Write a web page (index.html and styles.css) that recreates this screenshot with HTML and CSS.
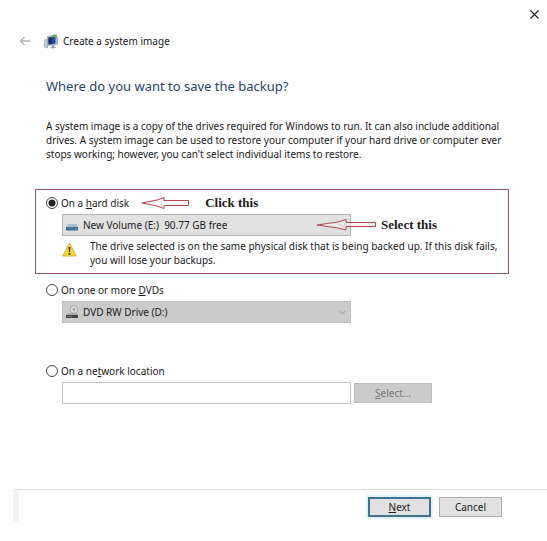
FILE: index.html
```html
<!DOCTYPE html>
<html lang="en">
  <head>
    <meta charset="UTF-8" />
    <meta name="viewport" content="width=device-width, initial-scale=1.0" />
    <title>Create a system image</title>
    <link rel="stylesheet" href="styles.css">
  </head>

  <body>
    <form class="wizard">
      <div class="titlebar">
        <button type="button" class="close" aria-label="Close">
          <svg width="9" height="9" viewBox="0 0 9 9"><path d="M0.5 0.5l8 8M8.5 0.5l-8 8" stroke="#222" stroke-width="1.1" /></svg>
        </button>
      </div>

      <header class="header">
        <button type="button" class="back" aria-label="Back">
          <svg width="12" height="10" viewBox="0 0 12 10"><path d="M11 5H1.5M5.5 1L1.5 5l4 4" fill="none" stroke="#b4b4b4" stroke-width="1.4" /></svg>
        </button>
        <svg class="app-icon" width="15" height="15" viewBox="0 0 15 15">
          <path d="M0.5 6l3-1v9l-3-1z" fill="#c3cbd4" stroke="#8a97a5" stroke-width="0.6" />
          <path d="M3.5 2.5l9-1.5v9.500l-9 1z" fill="#b9c6d8" stroke="#8796a8" stroke-width="0.6" />
          <path d="M4.500 3.500l7-1v7l-7 1z" fill="#234a94" />
          <path d="M4.500 3.500l3.500-.5v7l-3.500.5z" fill="#173170" />
          <path d="M7 3c1-2 3-3 4.500-2l.5-1 1.500 3.500-3.500.5 1-1c-1-.7-2.500 0-3 1z" fill="#69a66f" />
          <path d="M8 11l2-.3.500 2 2 .8-4 1-2.500-.8 2-.7z" fill="#8ea0bb" />
          <path d="M13.500 3v8" stroke="#a9b4c0" />
        </svg>
        <span>Create a system image</span>
      </header>

      <main class="content">
        <h1>Where do you want to save the backup?</h1>
        <p class="intro">
          A system image is a copy of the drives required for Windows to run. It can also include additional<br>
          drives. A system image can be used to restore your computer if your hard drive or computer ever<br>
          stops working; however, you can't select individual items to restore.
        </p>

        <section class="option highlight">
          <div class="option-row">
            <label class="choice"><input type="radio" name="target" value="disk" checked /> <span>On a <u>h</u>ard disk</span></label>
            <svg class="arrow" width="48" height="12" viewBox="0 0 48 12"><path d="M1 6L16 3l7-2.500v3H47.500v5H23v3L16 9z" /></svg>
            <strong class="note">Click this</strong>
          </div>
          <div class="field-row">
            <div class="picker">
              <svg class="drive" width="12" height="14" viewBox="0 0 12 14">
                <path d="M1.500 6h9l1.500 3H0z" fill="#a9bfd0" />
                <path d="M0 9h12v3.500H0z" fill="#3a678a" />
                <path d="M1 10h7" stroke="#6d9dbf" stroke-width="0.8" />
                <path d="M9 11h2" stroke="#7bc6d8" />
              </svg>
              <select aria-label="Hard disk"><option>New Volume (E:)&nbsp; 90.77 GB free</option></select>
              <svg class="chevron" width="9" height="5" viewBox="0 0 9 5"><path d="M1 .5l3.500 3.500L8 .5" /></svg>
            </div>
            <div class="callout">
              <svg class="arrow" width="60" height="12" viewBox="0 0 60 12"><path d="M1 6L22 3l8-2.500v3H59.500v4H30v3.500L22 9z" /></svg>
              <strong class="note">Select this</strong>
            </div>
          </div>
          <div class="warning">
            <svg width="15" height="15" viewBox="0 0 15 15">
              <path d="M7.500 1L14.300 14H.7z" fill="#f6d43c" stroke="#d9b63a" stroke-linejoin="round" />
              <path d="M6.500 5h2l-.5 5h-1z" fill="#3a3212" />
              <path d="M6.600 11h1.800v1.800H6.600z" fill="#3a3212" />
            </svg>
            <p>
              The drive selected is on the same physical disk that is being backed up. If this disk fails,<br>
              you will lose your backups.
            </p>
          </div>
        </section>

        <section class="option">
          <div class="option-row">
            <label class="choice"><input type="radio" name="target" value="dvd" /> <span>On one or more <u>D</u>VDs</span></label>
          </div>
          <div class="field-row">
            <div class="picker disabled">
              <svg class="drive" width="12" height="14" viewBox="0 0 12 14">
                <circle cx="8" cy="4.500" r="3.800" fill="#dedede" stroke="#999" stroke-width="0.8" />
                <circle cx="8" cy="4.500" r="1.200" fill="#b5b5b5" stroke="#888" stroke-width="0.5" />
                <path d="M1.500 8h9l1.500 2H0z" fill="#aaa" />
                <path d="M0 10h12v3H0z" fill="#444" />
                <path d="M1 11.500h5" stroke="#888" stroke-width="0.8" />
              </svg>
              <select aria-label="DVD drive" disabled><option>DVD RW Drive (D:)</option></select>
              <svg class="chevron" width="9" height="5" viewBox="0 0 9 5"><path d="M1 .5l3.500 3.500L8 .5" /></svg>
            </div>
          </div>
        </section>

        <section class="option">
          <div class="option-row">
            <label class="choice"><input type="radio" name="target" value="network" /> <span>On a ne<u>t</u>work location</span></label>
          </div>
          <div class="field-row">
            <input type="text" class="path" aria-label="Network location" />
            <button type="button" class="browse" disabled><u>S</u>elect...</button>
          </div>
        </section>
      </main>

      <footer class="footer">
        <button type="submit" class="btn primary"><u>N</u>ext</button>
        <button type="button" class="btn">Cancel</button>
      </footer>
    </form>
  </body>
</html>
```

FILE: styles.css
```css
* {
  box-sizing: border-box;
}

body {
  margin: 0;
  background: #fefefe;
  color: #1a1a1a;
  font: 10px/14px "Noto Sans", "Open Sans", sans-serif;
}

button,
input,
select {
  margin: 0;
  font: inherit;
  color: inherit;
}

p {
  margin: 0;
}

svg {
  display: block;
  flex: none;
}

.titlebar {
  display: flex;
  justify-content: flex-end;
  height: 29px;
  padding-right: 8px;
}

.close,
.back {
  display: flex;
  align-items: center;
  padding: 0;
  border: none;
  background: none;
}

.header {
  display: flex;
  align-items: center;
  height: 24px;
  padding-left: 19px;
}

.app-icon {
  margin: 0 4px 0 13px;
}

.content {
  padding: 0 38px 0 35px;
}

h1 {
  margin: 23px 0 23px 11px;
  color: #2b4468;
  font-size: 13px;
  font-weight: normal;
  line-height: 20px;
}

.intro {
  margin: 0 -20px 28px 11px;
}

.option {
  padding: 6px 0 33px 10px;
  border: 1px solid transparent;
}

.highlight {
  margin-bottom: 2px;
  padding-bottom: 6px;
  border-color: #96505f;
}

.option-row,
.field-row,
.choice {
  display: flex;
  align-items: center;
}

.option-row {
  height: 14px;
  margin-bottom: 4px;
}

.choice {
  gap: 3px;
}

.choice input {
  appearance: none;
  width: 12px;
  height: 12px;
  border: 1px solid #444;
  border-radius: 50%;
  background: #fff;
}

.choice input:checked {
  background: radial-gradient(#222 3px, #fff 4px);
}

.arrow {
  fill: #fbeeee;
  fill-opacity: 0.6;
  stroke: #a94a50;
}

.option-row .arrow {
  margin: 0 16px 0 12px;
}

.note {
  font: bold 13px/14px "Liberation Serif", serif;
  white-space: nowrap;
}

.field-row {
  position: relative;
  gap: 3px;
  padding-left: 16px;
}

.picker {
  position: relative;
  flex: 0 1 289px;
}

.picker select {
  appearance: none;
  display: block;
  width: 100%;
  height: 22px;
  padding: 0 20px;
  border: 1px solid #b5b5b5;
  border-radius: 0;
  background: #e1e1e1;
  opacity: 1;
}

.picker.disabled select {
  background: #cbcbcb;
  border-color: #bdbdbd;
}

.drive {
  position: absolute;
  top: 4px;
  left: 4px;
}

.chevron {
  position: absolute;
  top: 9px;
  right: 4px;
  fill: none;
  stroke: #777;
}

.disabled .chevron {
  stroke: #999;
}

/* arrow runs over the end of the drop-down */
.callout {
  display: flex;
  align-items: center;
  gap: 5px;
  margin-left: -38px;
  z-index: 1;
}

.warning {
  display: flex;
  gap: 13px;
  margin: 3px -20px 0 0;
  padding-left: 16px;
}

.warning svg {
  margin-top: 3px;
}

.path {
  flex: 0 1 289px;
  min-width: 0;
  height: 22px;
  padding: 0 4px;
  border: 1px solid #c4c4c4;
  background: #fff;
}

.browse {
  width: 78px;
  height: 20px;
  padding: 0;
  border: 1px solid #bdbdbd;
  background: #cccccc;
  color: #777;
}

.footer {
  display: flex;
  justify-content: flex-end;
  gap: 8px;
  margin: 51px 0 20px 13px;
  padding: 7px 45px 4px 0;
  border-top: 1px solid #dadcdc;
  border-left: 6px solid #f0f4f3;
}

.btn {
  width: 63px;
  height: 20px;
  padding: 0;
  border: 1px solid #adadad;
  background: #e1e1e1;
}

.primary {
  border: 2px solid #3f7290;
  box-shadow: 0 0 0 2px #e0f1f8;
}
```
